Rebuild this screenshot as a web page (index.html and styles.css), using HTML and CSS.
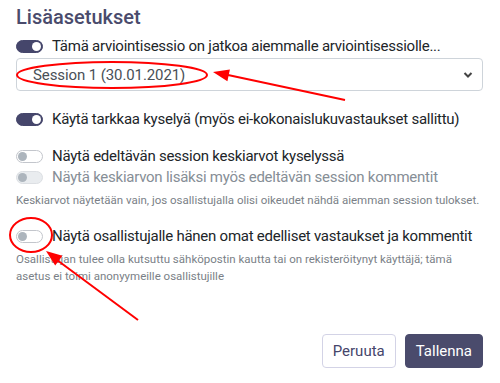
FILE: index.html
```html
<!DOCTYPE html>
<html>
<head>
    <title>Lisäasetukset</title>
    <meta charset="utf-8" />
    <link rel="stylesheet" href="styles.css">
</head>
<body>
    <div class="panel">
        <h2 class="panel-title">Lisäasetukset</h2>

        <div class="switch-row">
            <span class="switch on"></span>
            <span class="switch-label">Tämä arviointisessio on jatkoa aiemmalle arviointisessiolle...</span>
        </div>
        <div class="select-box">
            <span class="select-value">Session 1 (30.01.2021)</span>
            <svg class="chevron" width="10" height="8" viewBox="0 0 10 8">
                <path d="M1.5 2 L5 5.5 L8.5 2" fill="none" stroke="#444" stroke-width="2"/>
            </svg>
        </div>

        <div class="switch-row gap-a">
            <span class="switch on"></span>
            <span class="switch-label">Käytä tarkkaa kyselyä (myös ei-kokonaislukuvastaukset sallittu)</span>
        </div>

        <div class="switch-row gap-b">
            <span class="switch"></span>
            <span class="switch-label">Näytä edeltävän session keskiarvot kyselyssä</span>
        </div>
        <div class="switch-row">
            <span class="switch disabled"></span>
            <span class="switch-label muted">Näytä keskiarvon lisäksi myös edeltävän session kommentit</span>
        </div>
        <p class="help">Keskiarvot näytetään vain, jos osallistujalla olisi oikeudet nähdä aiemman session tulokset.</p>

        <div class="switch-row gap-c">
            <span class="switch"></span>
            <span class="switch-label">Näytä osallistujalle hänen omat edelliset vastaukset ja kommentit</span>
        </div>
        <p class="help">Osallistujan tulee olla kutsuttu sähköpostin kautta tai on rekisteröitynyt käyttäjä; tämä asetus ei toimi anonyymeille osallistujille</p>

        <div class="actions">
            <button class="btn btn-light">Peruuta</button>
            <button class="btn btn-dark">Tallenna</button>
        </div>
    </div>

    <!-- punaiset merkinnät kuvakaappauksen päällä -->
    <svg class="marks" width="500" height="383" viewBox="0 0 500 383">
        <g fill="none" stroke="#f00" stroke-width="2">
            <ellipse cx="112" cy="75" rx="95" ry="13"/>
            <line x1="345" y1="100" x2="228" y2="75"/>
            <ellipse cx="31" cy="235" rx="21" ry="17"/>
            <line x1="138" y1="320" x2="57" y2="260"/>
        </g>
        <polygon points="213,72 229.9,69.4 227.4,81.2" fill="#f00"/>
        <polygon points="46,251 62.4,255.8 55.2,265.4" fill="#f00"/>
    </svg>
</body>
</html>
```

FILE: styles.css
```css
body {
    margin: 0;
    background: #fff;
    font-family: Roboto, "Liberation Sans", sans-serif;
    color: #212529;
}

.panel {
    padding: 5px 17px 0 16px;
}

.panel-title {
    margin: 0 0 7px 0;
    font-size: 20px;
    font-weight: 500;
    line-height: 24px;
    color: #4a4b6c;
}

.switch-row {
    display: flex;
    align-items: center;
    height: 21px;
}

.gap-a {
    margin-top: 18px;
}

.gap-b {
    margin-top: 16px;
}

.gap-c {
    margin-top: 17px;
}

.switch {
    position: relative;
    width: 25px;
    height: 11px;
    border: 1px solid #c3c6cc;
    border-radius: 7px;
    background: #fff;
    margin-right: 9px;
    flex: none;
}

.switch::after {
    content: "";
    position: absolute;
    left: 1px;
    top: 1px;
    width: 9px;
    height: 9px;
    border-radius: 50%;
    background: #adb5bd;
}

.switch.on {
    background: #45466b;
    border-color: #45466b;
}

.switch.on::after {
    left: 15px;
    background: #fff;
}

.switch.disabled {
    background: #e9ecef;
    border-color: #dcdfe3;
}

.switch-label {
    font-size: 15px;
    letter-spacing: -0.25px;
    line-height: 21px;
    white-space: nowrap;
}

.muted {
    color: #868e96;
}

.select-box {
    display: flex;
    align-items: center;
    justify-content: space-between;
    height: 31px;
    margin-top: 1px;
    padding: 0 9px 0 16px;
    border: 1px solid #ced4da;
    border-radius: 4px;
}

.select-value {
    font-size: 15px;
    letter-spacing: -0.1px;
    color: #495057;
}

.help {
    margin: 4px 0 0 0;
    font-size: 11.5px;
    line-height: 17px;
    color: #7a7f87;
}

.actions {
    display: flex;
    justify-content: flex-end;
    gap: 9px;
    margin-top: 49px;
}

.btn {
    height: 34px;
    padding: 0 10px;
    font-family: inherit;
    font-size: 15px;
    border-radius: 4px;
    cursor: pointer;
}

.btn-light {
    background: #fff;
    border: 1px solid #d3d3e6;
    color: #45466b;
}

.btn-dark {
    background: #4a4b6c;
    border: 1px solid #4a4b6c;
    color: #fff;
}

.marks {
    position: absolute;
    left: 0;
    top: 0;
    pointer-events: none;
}
```
